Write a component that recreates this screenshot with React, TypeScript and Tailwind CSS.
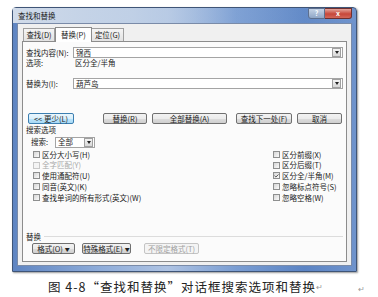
import { Check } from 'lucide-react'

const font = "font-['Noto_Sans_CJK_SC','Noto_Sans',sans-serif]"

function Btn({ label, w, primary, disabled, arrow }: { label: string; w: number; primary?: boolean; disabled?: boolean; arrow?: boolean }) {
  const tone = primary
    ? 'border-[#3c7fb1] bg-[linear-gradient(#eaf6fd_0%,#d9f0fc_50%,#bee6fd_51%,#a7d9f5_100%)]'
    : disabled
      ? 'border-[#c4c4c4] bg-[#f4f4f4] text-[#a0a0a0]'
      : 'border-[#707070] bg-[linear-gradient(#f2f2f2_0%,#ebebeb_50%,#dddddd_51%,#cfcfcf_100%)]'
  return (
    <div
      style={{ width: w }}
      className={`h-[11px] flex items-center justify-center gap-[2px] rounded-[2px] border text-[7.5px] leading-none ${tone}`}
    >
      <span>{label}</span>
      {arrow && <span className="text-[5px]">▼</span>}
    </div>
  )
}

function DropArrow() {
  return (
    <div className="w-[9px] h-[9px] mr-[1px] flex items-center justify-center border border-[#a0a0a0] bg-[linear-gradient(#f4f4f4,#d8d8d8)]">
      <div className="w-0 h-0 border-l-[2.5px] border-r-[2.5px] border-t-[3px] border-l-transparent border-r-transparent border-t-[#222]" />
    </div>
  )
}

function Box({ label, checked, disabled }: { label: string; checked?: boolean; disabled?: boolean }) {
  return (
    <div className={`h-[10.75px] flex items-center gap-[2px] text-[7.5px] leading-none ${disabled ? 'text-[#a8a8a8]' : 'text-[#222]'}`}>
      <div className={`w-[7px] h-[7px] flex items-center justify-center border ${disabled ? 'border-[#c8c8c8] bg-[#f4f4f4]' : 'border-[#8e8f8f] bg-[linear-gradient(135deg,#d6d6d6,#fbfbfb)]'}`}>
        {checked && <Check size={6} strokeWidth={4} className="text-[#333]" />}
      </div>
      <span>{label}</span>
    </div>
  )
}

export default function App() {
  const left = [
    { label: '区分大小写(H)' },
    { label: '全字匹配(Y)', disabled: true },
    { label: '使用通配符(U)' },
    { label: '同音(英文)(K)' },
    { label: '查找单词的所有形式(英文)(W)' },
  ]
  const right = [
    { label: '区分前缀(X)' },
    { label: '区分后缀(T)' },
    { label: '区分全/半角(M)', checked: true },
    { label: '忽略标点符号(S)' },
    { label: '忽略空格(W)' },
  ]

  return (
    <div className={`w-[378px] h-[297px] bg-white overflow-hidden text-[#222] ${font}`}>
      <div className="ml-[12px] mt-[7px] w-[345px] h-[265px] flex flex-col rounded-t-[4px] border border-[#3f5577] bg-[linear-gradient(90deg,#5f85c2_0%,#8eacd9_25%,#aec3e3_45%,#7a9dd2_65%,#5b84c4_85%,#6f93cc_100%)] shadow-[1px_1px_2px_rgba(0,0,0,0.4)]">
        {/* title bar */}
        <div className="h-[15px] flex items-start justify-between pl-[5px] pr-[4px] bg-[linear-gradient(90deg,rgba(215,224,236,0.95)_0%,rgba(200,214,232,0.8)_35%,rgba(140,172,218,0.3)_65%,rgba(120,155,210,0.1)_100%)]">
          <span className="mt-[4px] text-[7.5px] leading-none">查找和替换</span>
          <div className="flex">
            <div className="w-[17px] h-[11px] flex items-center justify-center rounded-bl-[3px] border border-[#5d6f8e] bg-[linear-gradient(#c5d3e6,#8fa6c6)] text-[7px] font-bold text-white leading-none">?</div>
            <div className="w-[27px] h-[11px] flex items-center justify-center rounded-br-[3px] border border-l-0 border-[#6e2f2f] bg-[linear-gradient(#e5a59b,#c7473a_55%,#d2675a)] text-[7px] font-bold text-white leading-none">x</div>
          </div>
        </div>

        {/* client area */}
        <div className="mx-[4px] mb-[5px] flex-1 flex flex-col bg-[#f0f0f0] border border-[#7a8ba8] px-[4px] pb-[3px]">
          {/* tabs */}
          <div className="flex h-[17px] items-end pl-[1px] text-[7.5px] leading-none">
            <div className="h-[13px] w-[32px] flex items-center justify-center border border-b-0 border-[#a0a0a0] bg-[linear-gradient(#f5f5f5,#e2e2e2)]">查找(D)</div>
            <div className="h-[15px] w-[37px] -mb-[1px] flex items-center justify-center border border-b-0 border-[#8c8c8c] bg-white relative z-10">替换(P)</div>
            <div className="h-[13px] w-[32px] flex items-center justify-center border border-b-0 border-l-0 border-[#a0a0a0] bg-[linear-gradient(#f5f5f5,#e2e2e2)]">定位(G)</div>
          </div>

          {/* tab panel */}
          <div className="flex-1 flex flex-col border border-[#8c8c8c] bg-[#fbfbfb] px-[3px] text-[7.5px] leading-none">
            <div className="mt-[5px] h-[11px] flex items-center">
              <span className="w-[47px]">查找内容(N):</span>
              <div className="flex-1 h-[11px] flex items-center justify-between border border-[#a4a4a4] bg-white pl-[2px]">
                <span>锦西</span>
                <DropArrow />
              </div>
            </div>
            <div className="h-[10px] flex items-center">
              <span className="w-[49px]">选项:</span>
              <span>区分全/半角</span>
            </div>
            <div className="mt-[10px] h-[11px] flex items-center">
              <span className="w-[47px]">替换为(I):</span>
              <div className="flex-1 h-[11px] flex items-center justify-between border border-[#a4a4a4] bg-white pl-[2px]">
                <span>葫芦岛</span>
                <DropArrow />
              </div>
            </div>

            <div className="mt-[24px] flex items-center">
              <div className="ml-[2px]"><Btn label="<< 更少(L)" w={46} primary /></div>
              <div className="ml-[29px]"><Btn label="替换(R)" w={44} /></div>
              <div className="ml-[5px]"><Btn label="全部替换(A)" w={75} /></div>
              <div className="ml-[9px]"><Btn label="查找下一处(F)" w={56} /></div>
              <div className="ml-[5px]"><Btn label="取消" w={45} /></div>
            </div>

            <div className="mt-[1px] h-[10px] flex items-center">搜索选项</div>
            <div className="mt-[1px] h-[12px] flex items-center pl-[5px]">
              <span className="w-[24px]">搜索:</span>
              <div className="w-[40px] h-[11px] flex items-center justify-between border border-[#a4a4a4] bg-white pl-[2px]">
                <span>全部</span>
                <DropArrow />
              </div>
            </div>

            <div className="mt-[1px] flex pl-[7px]">
              <div className="flex flex-col w-[240px]">
                {left.map((b) => <Box key={b.label} {...b} />)}
              </div>
              <div className="flex flex-col">
                {right.map((b) => <Box key={b.label} {...b} />)}
              </div>
            </div>

            <div className="mt-[29px] h-[10px] flex items-center gap-[3px]">
              <span>替换</span>
              <div className="flex-1 h-px bg-[#dcdcdc]" />
            </div>
            <div className="mt-[1px] flex items-center pl-[6px]">
              <Btn label="格式(O)" w={43} arrow />
              <div className="ml-[7px]"><Btn label="特殊格式(E)" w={49} arrow /></div>
              <div className="ml-[13px]"><Btn label="不限定格式(T)" w={55} disabled /></div>
            </div>
          </div>
        </div>
      </div>

      {/* caption */}
      <div className="mt-[8px] h-[14px] flex items-center">
        <span className="ml-[48px] text-[12.5px] tracking-[1px] leading-none">图 4-8“查找和替换”对话框搜索选项和替换</span>
        <span className="text-[8px] text-[#999] leading-none">↵</span>
        <span className="ml-auto mr-[13px] mt-[4px] text-[8px] text-[#999] leading-none">↵</span>
      </div>
    </div>
  )
}
